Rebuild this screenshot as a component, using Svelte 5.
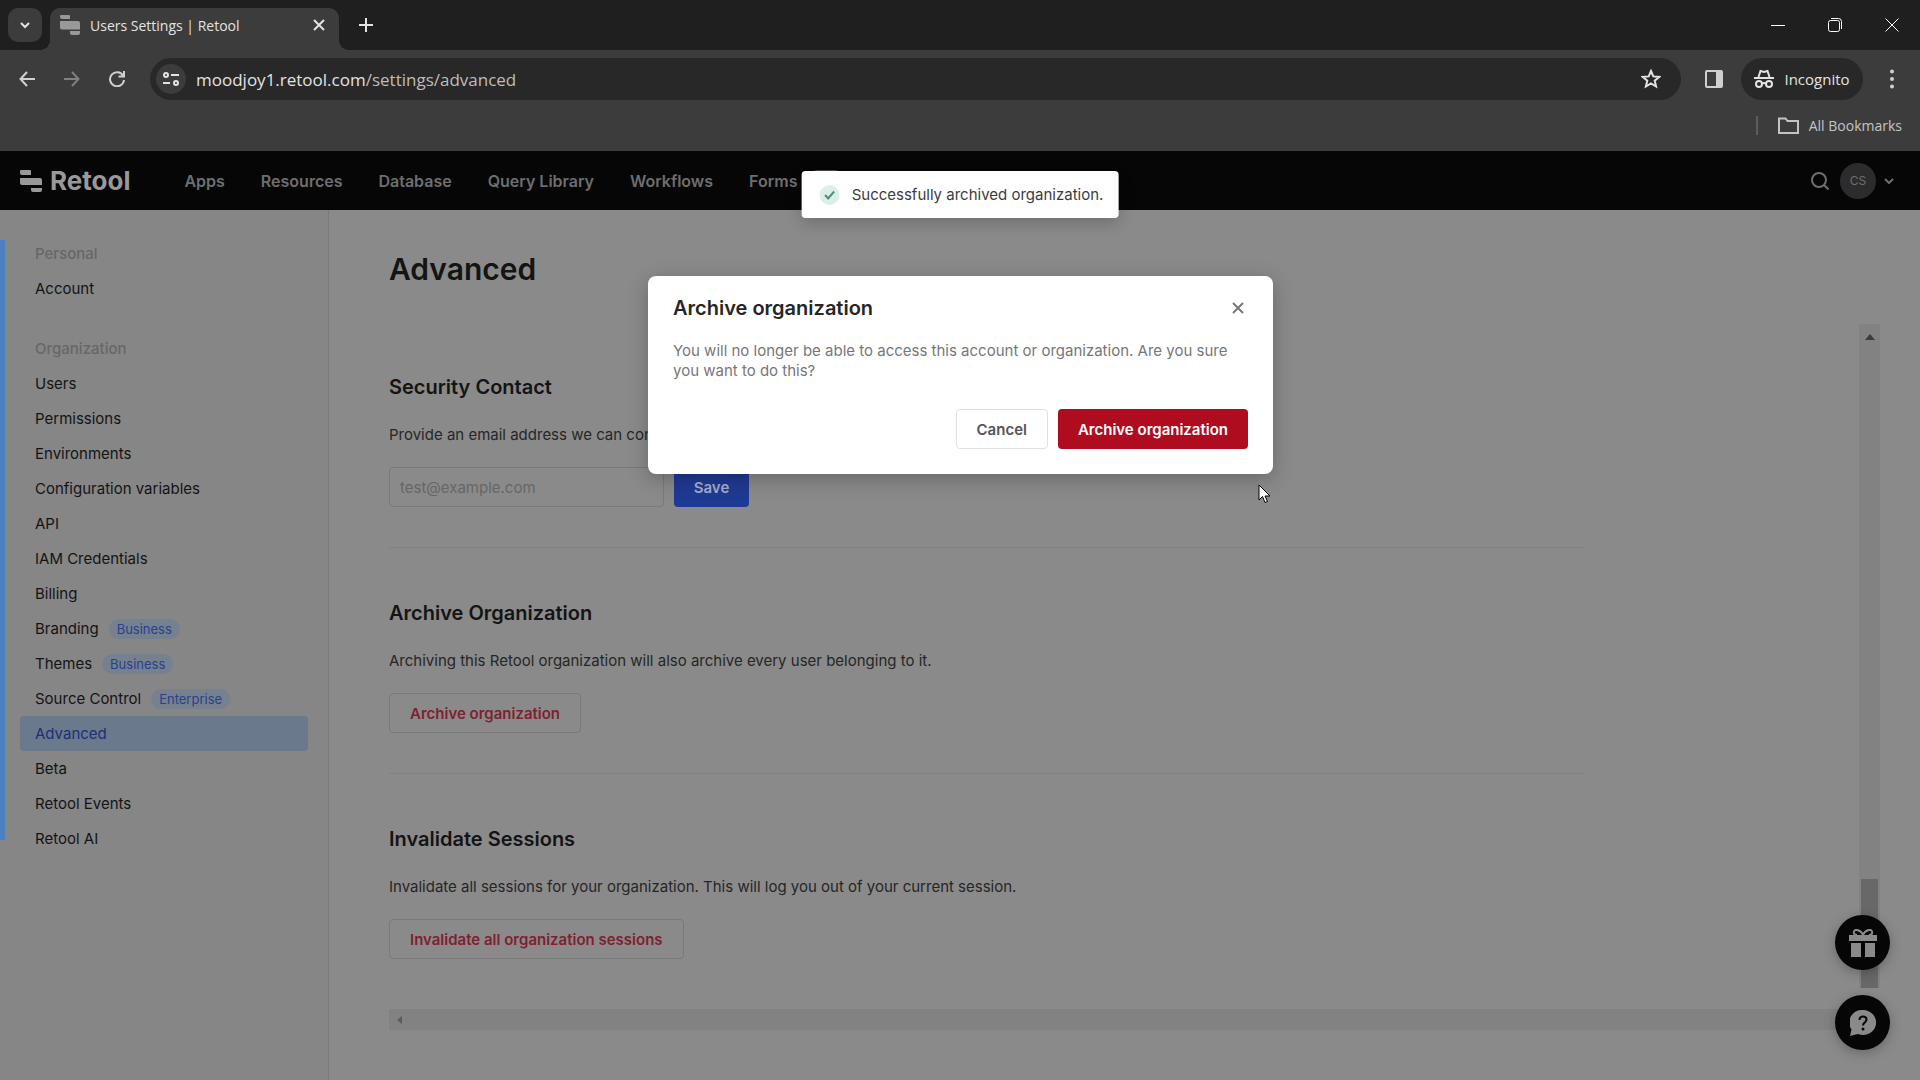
<script>
  let email = "";
  let dialogOpen = true;

  const topLinks = [
    "Apps",
    "Resources",
    "Database",
    "Query Library",
    "Workflows",
    "Forms",
  ];

  const menu = [
    { title: "Personal", items: [{ name: "Account" }] },
    {
      title: "Organization",
      items: [
        { name: "Users" },
        { name: "Permissions" },
        { name: "Environments" },
        { name: "Configuration variables" },
        { name: "API" },
        { name: "IAM Credentials" },
        { name: "Billing" },
        { name: "Branding", plan: "Business" },
        { name: "Themes", plan: "Business" },
        { name: "Source Control", plan: "Enterprise" },
        { name: "Advanced", active: true },
        { name: "Beta" },
        { name: "Retool Events" },
        { name: "Retool AI" },
      ],
    },
  ];

  const closeDialog = () => {
    dialogOpen = false;
  };
</script>

<div class="browser">
  <div class="tabstrip">
    <button class="tab-search" aria-label="Search tabs">
      <svg width="12" height="12" viewBox="0 0 12 12"><path d="M2 4l4 4 4-4" /></svg>
    </button>
    <div class="tab">
      <svg class="favicon" width="20" height="20" viewBox="0 0 20 20">
        <path d="M1 0h8a1 1 0 0 1 1 1v3H2a2 2 0 0 1-2-2V1a1 1 0 0 1 1-1zM0 6h18a2 2 0 0 1 2 2v6.500H2a2 2 0 0 1-2-2zM10 16h10v2a2 2 0 0 1-2 2h-6a2 2 0 0 1-2-2z" />
      </svg>
      <span>Users Settings | Retool</span>
      <button aria-label="Close tab">
        <svg width="12" height="12" viewBox="0 0 12 12"><path d="M1 1l10 10M11 1L1 11" /></svg>
      </button>
    </div>
    <button class="new-tab" aria-label="New tab">
      <svg width="14" height="14" viewBox="0 0 14 14"><path d="M7 0v14M0 7h14" /></svg>
    </button>
    <div class="window-buttons">
      <button aria-label="Minimize">
        <svg width="14" height="14" viewBox="0 0 14 14"><path d="M0 7.500h14" /></svg>
      </button>
      <button aria-label="Restore">
        <svg width="14" height="14" viewBox="0 0 14 14">
          <rect x=".5" y="2.500" width="11" height="11" rx="2" /><path d="M3 .5h7.500a3 3 0 0 1 3 3V11" />
        </svg>
      </button>
      <button aria-label="Close">
        <svg width="14" height="14" viewBox="0 0 14 14"><path d="M.5 .5l13 13M13.500 .5l-13 13" /></svg>
      </button>
    </div>
  </div>

  <div class="toolbar">
    <button aria-label="Back">
      <svg width="16" height="16" viewBox="0 0 16 16"><path d="M16 8H2M8 1L1.500 8 8 15" /></svg>
    </button>
    <button class="faded" aria-label="Forward">
      <svg width="16" height="16" viewBox="0 0 16 16"><path d="M0 8h14M8 1l6.500 7L8 15" /></svg>
    </button>
    <button aria-label="Reload">
      <svg width="16" height="16" viewBox="0 0 16 16"><path d="M14 4.500A7 7 0 1 0 15 9M15 0v5.500H9.500" /></svg>
    </button>
    <div class="address">
      <button class="site-info" aria-label="Site information">
        <svg width="16" height="14" viewBox="0 0 16 14">
          <circle cx="3" cy="3" r="2" /><path d="M8 3h8M0 11h7" /><circle cx="13" cy="11" r="2" />
        </svg>
      </button>
      <span class="url">moodjoy1.retool.com<i>/settings/advanced</i></span>
      <button aria-label="Bookmark this tab">
        <svg width="20" height="20" viewBox="0 0 20 20">
          <path d="M10 2l2.300 5.400 5.900.5-4.500 3.800 1.400 5.800L10 14.400l-5.100 3.100 1.400-5.800L1.800 7.900l5.900-.5z" />
        </svg>
      </button>
    </div>
    <button class="side-panel" aria-label="Side panel">
      <svg width="18" height="18" viewBox="0 0 18 18">
        <rect x="1" y="1" width="16" height="16" rx="1" /><path class="solid" d="M11 1h6v16h-6z" />
      </svg>
    </button>
    <button class="incognito">
      <svg width="20" height="20" viewBox="0 0 20 20">
        <path d="M0 9h20M4.500 8L6.500 2l3.500 1 3.500-1 2 6" /><circle cx="5" cy="15" r="3" /><circle cx="15" cy="15" r="3" /><path d="M8 14.500q2-1 4 0" />
      </svg>
      Incognito
    </button>
    <button class="kebab" aria-label="Chrome menu">
      <svg width="4" height="20" viewBox="0 0 4 20">
        <circle cx="2" cy="2.500" r="2" /><circle cx="2" cy="10" r="2" /><circle cx="2" cy="17.500" r="2" />
      </svg>
    </button>
  </div>

  <div class="bookmarks">
    <button>
      <svg width="21" height="17" viewBox="0 0 21 17"><path d="M1 1.500h6.500l2 2.500H20v12H1z" /></svg>
      All Bookmarks
    </button>
  </div>

  <div class="page">
    <header>
      <a class="logo" href="/">
        <svg width="22" height="24" viewBox="0 0 22 24">
          <path d="M1 1h9a1 1 0 0 1 1 1v4H2a2 2 0 0 1-2-2V2a1 1 0 0 1 1-1zM0 9h20a2 2 0 0 1 2 2v5H2a2 2 0 0 1-2-2zM11 19h11v2a2 2 0 0 1-2 2h-7a2 2 0 0 1-2-2z" />
        </svg>
        Retool
      </a>
      <nav>
        {#each topLinks as link}
          <a href="/">{link}</a>
        {/each}
        <span class="new-pill"></span>
      </nav>
      <button aria-label="Search">
        <svg width="18" height="18" viewBox="0 0 18 18"><circle cx="8" cy="8" r="7" /><path d="M13 13l4.500 4.500" /></svg>
      </button>
      <button class="avatar">CS</button>
      <button class="account-menu" aria-label="Account menu">
        <svg width="10" height="6" viewBox="0 0 10 6"><path d="M1 1l4 4 4-4" /></svg>
      </button>
    </header>

    <div class="body">
      <aside>
        {#each menu as group}
          <h4>{group.title}</h4>
          <ul>
            {#each group.items as item}
              <li>
                <a href="/" class:active={item.active}>
                  {item.name}
                  {#if item.plan}<span class="plan">{item.plan}</span>{/if}
                </a>
              </li>
            {/each}
          </ul>
        {/each}
      </aside>

      <main>
        <h1>Advanced</h1>
        <div class="scroller">
          <div class="sections">
            <section>
              <h2>Security Contact</h2>
              <label for="contact">Provide an email address we can contact</label>
              <div class="row">
                <input id="contact" type="email" placeholder="test@example.com" bind:value={email} />
                <button class="save">Save</button>
              </div>
            </section>
            <section>
              <h2>Archive Organization</h2>
              <p>Archiving this Retool organization will also archive every user belonging to it.</p>
              <button class="danger" on:click={() => (dialogOpen = true)}>Archive organization</button>
            </section>
            <section>
              <h2>Invalidate Sessions</h2>
              <p>Invalidate all sessions for your organization. This will log you out of your current session.</p>
              <button class="danger">Invalidate all organization sessions</button>
            </section>
          </div>
          <div class="vbar">
            <svg width="10" height="6" viewBox="0 0 10 6"><path d="M0 6l5-6 5 6z" /></svg>
            <div class="thumb"></div>
          </div>
        </div>
        <div class="hbar">
          <svg width="5" height="8" viewBox="0 0 5 8"><path d="M5 0v8L0 4z" /></svg>
        </div>
      </main>
    </div>

    <div class="edge"></div>

    <div class="floating">
      <button aria-label="What's new">
        <svg width="28" height="28" viewBox="0 0 28 28">
          <path d="M0 6h28v6H0zM2 14h10v14H2zM16 14h10v14H16z" />
          <path class="bow" d="M14 6C12 1 6-.5 5 2.500S7 6 8 6M14 6c2-5 8-6.500 9-3.500S21 6 20 6" />
        </svg>
      </button>
      <button aria-label="Help">
        <svg width="26" height="26" viewBox="0 0 26 26">
          <path d="M13 0a13 12.500 0 1 1-5 24L0 26l1.500-6.500A13 12.500 0 0 1 13 0z" />
          <path class="mark" d="M9.500 10c0-5 7-4.500 7-.5 0 3-3.500 3-3.500 6" /><circle class="dot" cx="13" cy="19" r="1.500" />
        </svg>
      </button>
    </div>

    {#if dialogOpen}
      <div class="dialog" role="dialog" aria-labelledby="dialog-title">
        <div class="dialog-head">
          <h3 id="dialog-title">Archive organization</h3>
          <button aria-label="Close dialog" on:click={closeDialog}>
            <svg width="12" height="12" viewBox="0 0 12 12"><path d="M1 1l10 10M11 1L1 11" /></svg>
          </button>
        </div>
        <p>You will no longer be able to access this account or organization. Are you sure you want to do this?</p>
        <div class="dialog-buttons">
          <button class="cancel" on:click={closeDialog}>Cancel</button>
          <button class="confirm">Archive organization</button>
        </div>
      </div>
    {/if}

    <div class="toast" role="status">
      <svg width="20" height="20" viewBox="0 0 20 20"><circle cx="10" cy="10" r="10" /><path d="M5.500 10l3 3.500 6-7" /></svg>
      Successfully archived organization.
    </div>

    <svg class="pointer" width="13" height="20" viewBox="0 0 13 20">
      <path d="M1 1v15l3.500-3.500L7 18.500l2.500-1L7 12h5z" />
    </svg>
  </div>
</div>

<style>
  :global(body) {
    margin: 0;
    background: #8a8a8a;
  }
  .browser {
    min-height: 100vh;
    display: flex;
    flex-direction: column;
    background: #3c3c3c;
    color: #e3e3e3;
    font-family: "Open Sans", "Noto Sans", sans-serif;
    font-size: 15px;
  }
  button {
    border: 0;
    padding: 0;
    background: none;
    color: inherit;
    font: inherit;
    display: flex;
    align-items: center;
    justify-content: center;
  }
  a {
    color: inherit;
    text-decoration: none;
  }
  svg {
    flex: none;
    fill: none;
    stroke: currentColor;
    stroke-width: 2;
  }

  /* browser chrome */
  .tabstrip {
    height: 50px;
    display: flex;
    align-items: center;
    background: #1f1f1f;
  }
  .tab-search {
    width: 34px;
    height: 34px;
    margin: 0 8px;
    border-radius: 10px;
    background: #3c3c3c;
  }
  .tab {
    position: relative;
    width: 289px;
    height: 42px;
    box-sizing: border-box;
    align-self: flex-end;
    display: flex;
    align-items: center;
    padding: 0 14px 8px 10px;
    gap: 10px;
    background: #3c3c3c;
    border-radius: 10px 10px 0 0;
    font-size: 14px;
  }
  /* the curved feet of the tab */
  .tab::before,
  .tab::after {
    content: "";
    position: absolute;
    bottom: 0;
    width: 10px;
    height: 10px;
  }
  .tab::before {
    left: -10px;
    background: radial-gradient(circle at 0 0, #1f1f1f 10px, #3c3c3c 10px);
  }
  .tab::after {
    right: -10px;
    background: radial-gradient(circle at 100% 0, #1f1f1f 10px, #3c3c3c 10px);
  }
  .tab span {
    flex: 1;
  }
  .tab .favicon,
  .logo svg {
    fill: #999;
    stroke: none;
  }
  .new-tab {
    width: 30px;
    height: 30px;
    margin-left: 12px;
  }
  .window-buttons {
    margin-left: auto;
    display: flex;
  }
  .window-buttons button {
    width: 57px;
    height: 48px;
  }
  .window-buttons svg {
    stroke-width: 1;
    stroke: #fff;
  }
  .toolbar {
    height: 58px;
    display: flex;
    align-items: center;
    padding: 0 16px 0 9px;
    gap: 9px;
  }
  .toolbar > button {
    width: 36px;
    height: 36px;
    flex: none;
    color: #d0d0d0;
  }
  .toolbar .faded {
    color: #808080;
  }
  .address {
    flex: 1;
    height: 42px;
    display: flex;
    align-items: center;
    padding: 0 20px 0 6px;
    margin-left: 6px;
    border-radius: 21px;
    background: #282828;
    font-size: 17px;
  }
  .site-info {
    width: 30px;
    height: 30px;
    border-radius: 50%;
    background: #3c3c3c;
  }
  .url {
    flex: 1;
    margin-left: 10px;
  }
  .url i {
    font-style: normal;
    color: #bdbdbd;
  }
  .side-panel .solid,
  .kebab svg {
    fill: currentColor;
    stroke: none;
  }
  .toolbar .side-panel {
    margin-left: 6px;
  }
  .toolbar .incognito {
    width: 122px;
    height: 42px;
    gap: 10px;
    border-radius: 21px;
    background: #282828;
    color: #e3e3e3;
  }
  .toolbar .kebab {
    width: 24px;
    margin-left: 8px;
  }
  .bookmarks {
    height: 43px;
    display: flex;
    justify-content: flex-end;
    align-items: flex-start;
    padding: 0 18px;
    color: #c4c4c4;
    font-size: 14px;
  }
  .bookmarks button {
    margin-top: 8px;
    padding-left: 20px;
    gap: 10px;
    border-left: 2px solid #5c5c5c;
  }

  /* Retool page */
  .page {
    flex: 1;
    display: flex;
    flex-direction: column;
    position: relative;
    background: #8a8a8a;
    color: #141414;
    font-family: Inter, sans-serif;
    font-size: 15px;
  }
  header {
    height: 59px;
    display: flex;
    align-items: center;
    padding: 0 26px 0 20px;
    background: #060606;
    color: #6e6e6e;
  }
  .logo {
    display: flex;
    align-items: center;
    gap: 8px;
    color: #999;
    font-size: 26px;
    font-weight: 700;
  }
  nav {
    flex: 1;
    display: flex;
    align-items: center;
    gap: 36px;
    margin-left: 54px;
    font-size: 16px;
    font-weight: 600;
  }
  .new-pill {
    width: 38px;
    height: 22px;
    margin-left: -26px;
    border-radius: 11px;
    background: #4a4a4a;
  }
  .avatar {
    width: 36px;
    height: 36px;
    margin: 0 8px 0 11px;
    border-radius: 50%;
    background: #2c2c2c;
    font-size: 12px;
  }
  .body {
    flex: 1;
    display: flex;
  }
  aside {
    width: 329px;
    box-sizing: border-box;
    padding: 26px 20px;
    border-right: 1px solid #7a7a7a;
    background: #868686;
  }
  h4 {
    margin: 0;
    padding: 0 15px;
    line-height: 35px;
    font-size: 15px;
    font-weight: 500;
    color: #676767;
  }
  ul {
    margin: 0 0 25px;
    padding: 0;
    list-style: none;
  }
  aside a {
    height: 35px;
    display: flex;
    align-items: center;
    gap: 10px;
    padding: 0 15px;
    border-radius: 4px;
  }
  aside a.active {
    background: #6a798b;
    color: #1d2f78;
  }
  .plan {
    padding: 0 8px;
    line-height: 20px;
    border-radius: 10px;
    background: #75818f;
    color: #2b3f8c;
    font-size: 13px;
  }
  main {
    flex: 1;
    min-width: 0;
    padding: 0 40px 50px 60px;
  }
  h1 {
    margin: 36px 0 0;
    line-height: 46px;
    font-size: 30px;
    font-weight: 600;
  }
  .scroller {
    display: flex;
    margin-top: 30px;
  }
  .sections {
    flex: 1;
    padding-right: 273px;
  }
  section {
    height: 226px;
    box-sizing: border-box;
    padding-top: 50px;
    border-bottom: 1px solid #828282;
  }
  section:last-child {
    height: auto;
    padding-bottom: 29px;
    border: 0;
  }
  h2 {
    margin: 0;
    line-height: 30px;
    font-size: 20px;
    font-weight: 600;
  }
  section p,
  label {
    display: block;
    margin: 21px 0 20px;
    line-height: 24px;
    color: #262626;
  }
  .row {
    display: flex;
    gap: 10px;
  }
  input {
    width: 275px;
    height: 40px;
    box-sizing: border-box;
    padding: 0 10px;
    border: 1px solid #7a7a7a;
    border-radius: 4px;
    background: none;
    font: inherit;
  }
  input::placeholder {
    color: #666;
    opacity: 1;
  }
  .save {
    width: 75px;
    border-radius: 4px;
    background: #1f3a93;
    color: #a3adc9;
    font-weight: 600;
  }
  .danger {
    height: 40px;
    padding: 0 20px;
    border: 1px solid #7a7a7a;
    border-radius: 4px;
    color: #7f1f30;
    font-weight: 600;
  }
  .vbar {
    width: 21px;
    box-sizing: border-box;
    display: flex;
    flex-direction: column;
    align-items: center;
    justify-content: space-between;
    margin-top: 2px;
    padding-top: 10px;
    background: #828282;
  }
  .vbar svg,
  .hbar svg {
    fill: #3c3c3c;
    stroke: none;
  }
  .thumb {
    width: 17px;
    height: 109px;
    background: #686868;
  }
  .hbar {
    height: 21px;
    display: flex;
    align-items: center;
    padding-left: 8px;
    margin: 21px 21px 0 0;
    background: #828282;
  }
  .hbar svg {
    fill: #5c5c5c;
  }

  /* everything that floats over the page */
  .edge {
    position: absolute;
    left: 0;
    top: 89px;
    width: 5px;
    height: 600px;
    background: #4a7fc1;
  }
  .floating {
    position: absolute;
    right: 30px;
    bottom: 30px;
    display: flex;
    flex-direction: column;
    gap: 25px;
  }
  .floating button {
    width: 55px;
    height: 55px;
    border-radius: 50%;
    background: #060606;
    color: #8a8a8a;
    box-shadow: 0 3px 12px rgba(0, 0, 0, 0.25);
  }
  .floating svg {
    fill: currentColor;
    stroke: none;
  }
  .floating .bow,
  .floating .mark {
    fill: none;
    stroke: currentColor;
    stroke-width: 2;
  }
  .floating .mark {
    stroke: #060606;
  }
  .floating .dot {
    fill: #060606;
  }
  .dialog {
    position: absolute;
    top: 125px;
    left: 50%;
    width: 625px;
    box-sizing: border-box;
    margin-left: -312px;
    padding: 17px 25px 25px;
    border-radius: 8px;
    background: #fff;
    box-shadow: 0 5px 20px rgba(0, 0, 0, 0.25);
  }
  .dialog-head {
    display: flex;
    justify-content: space-between;
    align-items: center;
    padding-right: 4px;
  }
  h3 {
    margin: 0;
    line-height: 30px;
    font-size: 20px;
    font-weight: 600;
    color: #262626;
  }
  .dialog-head svg {
    color: #777;
  }
  .dialog p {
    margin: 18px 0 28px;
    line-height: 20px;
    color: #777;
  }
  .dialog-buttons {
    display: flex;
    justify-content: flex-end;
    gap: 10px;
    font-weight: 600;
  }
  .dialog-buttons button {
    height: 40px;
    padding: 0 20px;
    border-radius: 4px;
  }
  .dialog-buttons .cancel {
    border: 1px solid #e0e0e0;
    color: #555;
  }
  .dialog-buttons .confirm {
    background: #b00c20;
    color: #fff;
  }
  .toast {
    position: absolute;
    top: 20px;
    left: 50%;
    transform: translateX(-50%);
    height: 47px;
    display: flex;
    align-items: center;
    gap: 12px;
    padding: 0 15px 0 18px;
    border-radius: 4px;
    background: #fff;
    color: #3c3c3c;
    white-space: nowrap;
    box-shadow: 0 5px 16px rgba(0, 0, 0, 0.2);
  }
  .toast circle {
    fill: #dcefe6;
    stroke: none;
  }
  .toast path {
    stroke: #4b9178;
  }
  .pointer {
    position: absolute;
    left: 1258px;
    top: 333px;
    fill: #fff;
    stroke: #000;
    stroke-width: 1;
  }
</style>
